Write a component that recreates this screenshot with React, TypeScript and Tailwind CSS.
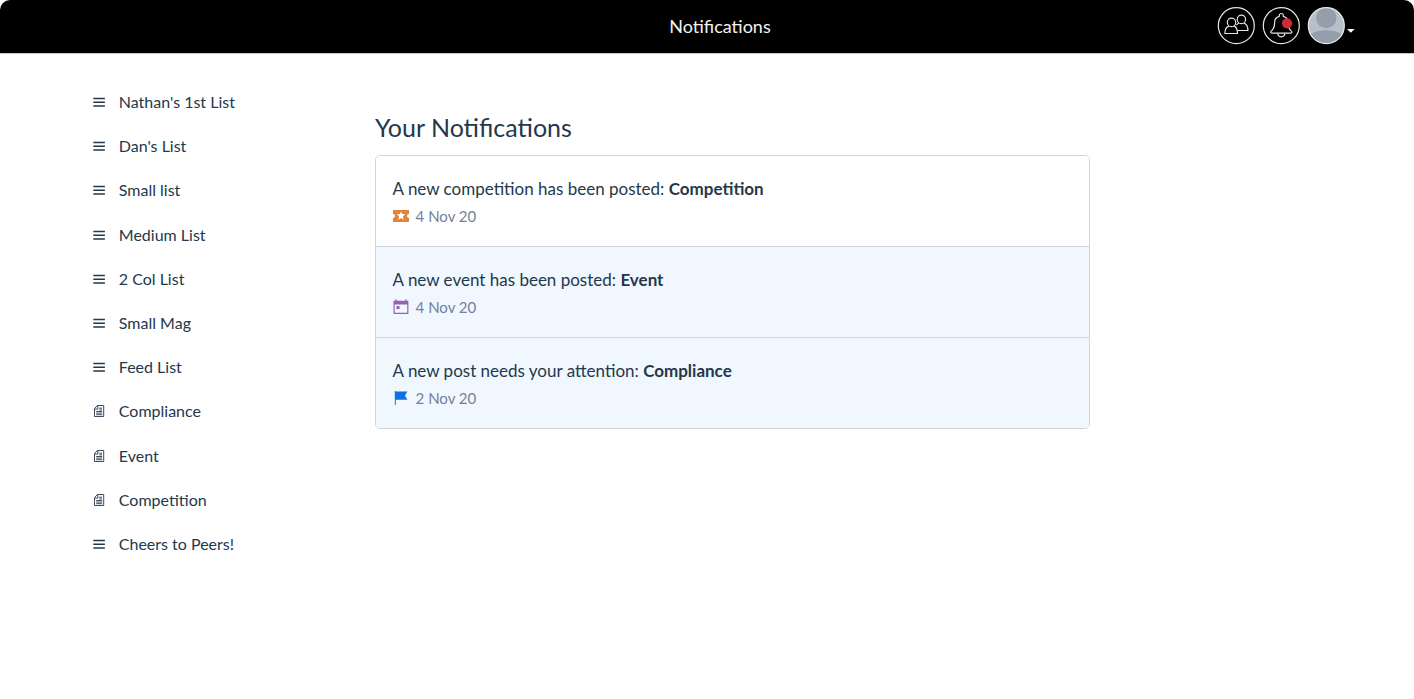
import React from "react";

type NavItem = { label: string; kind: "list" | "page" };
type Notice = { text: string; subject: string; date: string; icon: React.ReactNode; unread: boolean };

const NAV: NavItem[] = [
  { label: "Nathan's 1st List", kind: "list" },
  { label: "Dan's List", kind: "list" },
  { label: "Small list", kind: "list" },
  { label: "Medium List", kind: "list" },
  { label: "2 Col List", kind: "list" },
  { label: "Small Mag", kind: "list" },
  { label: "Feed List", kind: "list" },
  { label: "Compliance", kind: "page" },
  { label: "Event", kind: "page" },
  { label: "Competition", kind: "page" },
  { label: "Cheers to Peers!", kind: "list" },
];

const ListIcon = () => (
  <svg width="12" height="12" viewBox="0 0 12 12" className="shrink-0" stroke="currentColor" strokeWidth="1.5">
    <path d="M.3 2.4h11.6M.3 6.3h11.6M.3 10.1h11.6" />
  </svg>
);

const PageIcon = () => (
  <svg width="12" height="12" viewBox="0 0 12 12" className="shrink-0" stroke="currentColor" strokeWidth="0.9" fill="none">
    <path d="M4.3 .5h6.4v11H1.5V3.7zM4.8 .5v3.6H1.5" />
    <path d="M6.2 3.2h2.8M6.2 4.9h2.8M3.2 6.5h6M3.2 8.1h6M3.2 9.7h6" strokeWidth="0.9" />
  </svg>
);

const TicketIcon = () => (
  <svg width="16" height="12" viewBox="0 0 16 12" fill="#e38339">
    <path
      fillRule="evenodd"
      d="M.6 0h14.8a.6.6 0 0 1 .6.6V4a2 2 0 0 0 0 4v3.4a.6.6 0 0 1-.6.6H.6a.6.6 0 0 1-.6-.6V8a2 2 0 0 0 0-4V.6A.6.6 0 0 1 .6 0zM8 1.2 6.9 4.1 3.7 4.3 6.2 6.4 5.3 9.7 8 7.9l2.7 1.8-.9-3.3 2.5-2.1-3.2-.2z"
    />
  </svg>
);

const CalendarIcon = () => (
  <svg width="16" height="16" viewBox="0 0 16 16" fill="#9263b5">
    <path fillRule="evenodd" d="M2.4.4h1.4V1.7h8.4V.4h1.4V1.7H15.4v13.2H.5V1.7h1.9zM1.7 5.6v8.1h12.5V5.6z" />
    <path d="M3.5 7h3v3h-3z" />
  </svg>
);

const FlagIcon = () => (
  <svg width="16" height="16" viewBox="0 0 16 16" fill="#0f6fe5">
    <path d="M1.8.9h1v.5h11.6L12 5.5l2.4 4.3H2.8v5h-1z" />
  </svg>
);

const NOTICES: Notice[] = [
  { text: "A new competition has been posted:", subject: "Competition", date: "4 Nov 20", icon: <TicketIcon />, unread: false },
  { text: "A new event has been posted:", subject: "Event", date: "4 Nov 20", icon: <CalendarIcon />, unread: true },
  { text: "A new post needs your attention:", subject: "Compliance", date: "2 Nov 20", icon: <FlagIcon />, unread: true },
];

const PeopleButton = () => (
  <svg width="38" height="38" viewBox="-0.3 0.3 38 38" fill="none" stroke="#e4e4e4" strokeWidth="1.2">
    <circle cx="19" cy="19" r="18" />
    <circle cx="14.2" cy="15.7" r="4.2" />
    <path d="M11.8 19.2c-2.8 1-4.2 3.5-4.2 7.6h12.6c0-4.1-1.2-6.6-3.7-7.6" />
    <circle cx="24.1" cy="12.7" r="4.2" />
    <path d="M21.7 16.3c-1.1.4-2 1.1-2.6 2.1M26.4 16.2c2.8 1.1 4.2 3.8 4.2 7.6h-10.7" />
  </svg>
);

const BellButton = () => (
  <svg width="38" height="38" viewBox="-0.3 0.3 38 38" fill="none" stroke="#e4e4e4" strokeWidth="1.2">
    <circle cx="19" cy="19" r="18" />
    <path d="M17 9.7V8.8a2 2 0 0 1 4 0v.9c3.3.8 4.7 3.2 4.7 6.3 0 4.6 1.2 6.6 3.4 8.4.9.8.6 2-.6 2h-19c-1.2 0-1.5-1.2-.6-2 2.2-1.8 3.4-3.8 3.4-8.4 0-3.1 1.4-5.5 4.7-6.3z" />
    <path d="M15.5 26.6a3.5 3.5 0 0 0 7 0" />
    <circle cx="24.7" cy="16.6" r="5.1" fill="#d42a38" stroke="none" />
  </svg>
);

const Avatar = () => (
  <svg width="38" height="38" viewBox="-0.3 0.3 38 38">
    <defs>
      <clipPath id="avatar-circle">
        <circle cx="19" cy="19" r="18" />
      </clipPath>
    </defs>
    <g clipPath="url(#avatar-circle)">
      <path fill="#b9bfc9" d="M0 0h38v38H0z" />
      <circle cx="19" cy="11.3" r="10.2" fill="#959eab" />
      <ellipse cx="19" cy="34.5" rx="20" ry="11" fill="#959eab" />
    </g>
    <circle cx="19" cy="19" r="18" fill="none" stroke="#e8eaec" strokeWidth="1.2" />
  </svg>
);

export default function App() {
  return (
    <div className="h-[699px] w-full overflow-hidden bg-white font-['Lato',sans-serif] text-[#24384b]">
      <header className="grid h-[54px] grid-cols-3 items-center rounded-t-[10px] border-b border-[#c8c8c8] bg-black">
        <div />
        <h1 className="pb-[2px] pl-[26px] text-center text-[18px] leading-6 text-[#f2f2f2]">Notifications</h1>
        <div className="flex items-center justify-end gap-[7px] pr-[59px] pb-[1px]">
          <PeopleButton />
          <BellButton />
          <div className="flex items-center gap-[2px]">
            <Avatar />
            <svg width="8" height="4" viewBox="0 0 8 4" className="mt-[9px]" fill="#fff">
              <path d="M0 0h7.6L3.8 3.8z" />
            </svg>
          </div>
        </div>
      </header>

      <div className="flex">
        <nav className="w-[375px] shrink-0 pt-[26px] pl-[93px]">
          <ul>
            {NAV.map((item) => (
              <li key={item.label} className="flex h-[44.2px] items-center gap-[13.8px] text-[16px] leading-6">
                {item.kind === "list" ? <ListIcon /> : <PageIcon />}
                <span>{item.label}</span>
              </li>
            ))}
          </ul>
        </nav>

        <main className="w-[715px] pt-[57px]">
          <h2 className="text-[25px] leading-8">Your Notifications</h2>
          <div className="mt-[12px] h-[274px] divide-y divide-[#d3d6d9] overflow-hidden rounded-[5px] border border-[#d3d6d9]">
            {NOTICES.map((n) => (
              <article key={n.subject} className={n.unread ? "h-[91px] bg-[#f0f7ff] px-[16.6px] pt-[21px]" : "h-[91px] bg-white px-[16.6px] pt-[21px]"}>
                <p className="text-[17px] leading-6">
                  {n.text} <strong className="font-bold">{n.subject}</strong>
                </p>
                <div className="mt-[3px] flex h-6 items-center gap-[7px] text-[15px] leading-6 text-[#73819c]">
                  {n.icon}
                  <span>{n.date}</span>
                </div>
              </article>
            ))}
          </div>
        </main>
      </div>
    </div>
  );
}
